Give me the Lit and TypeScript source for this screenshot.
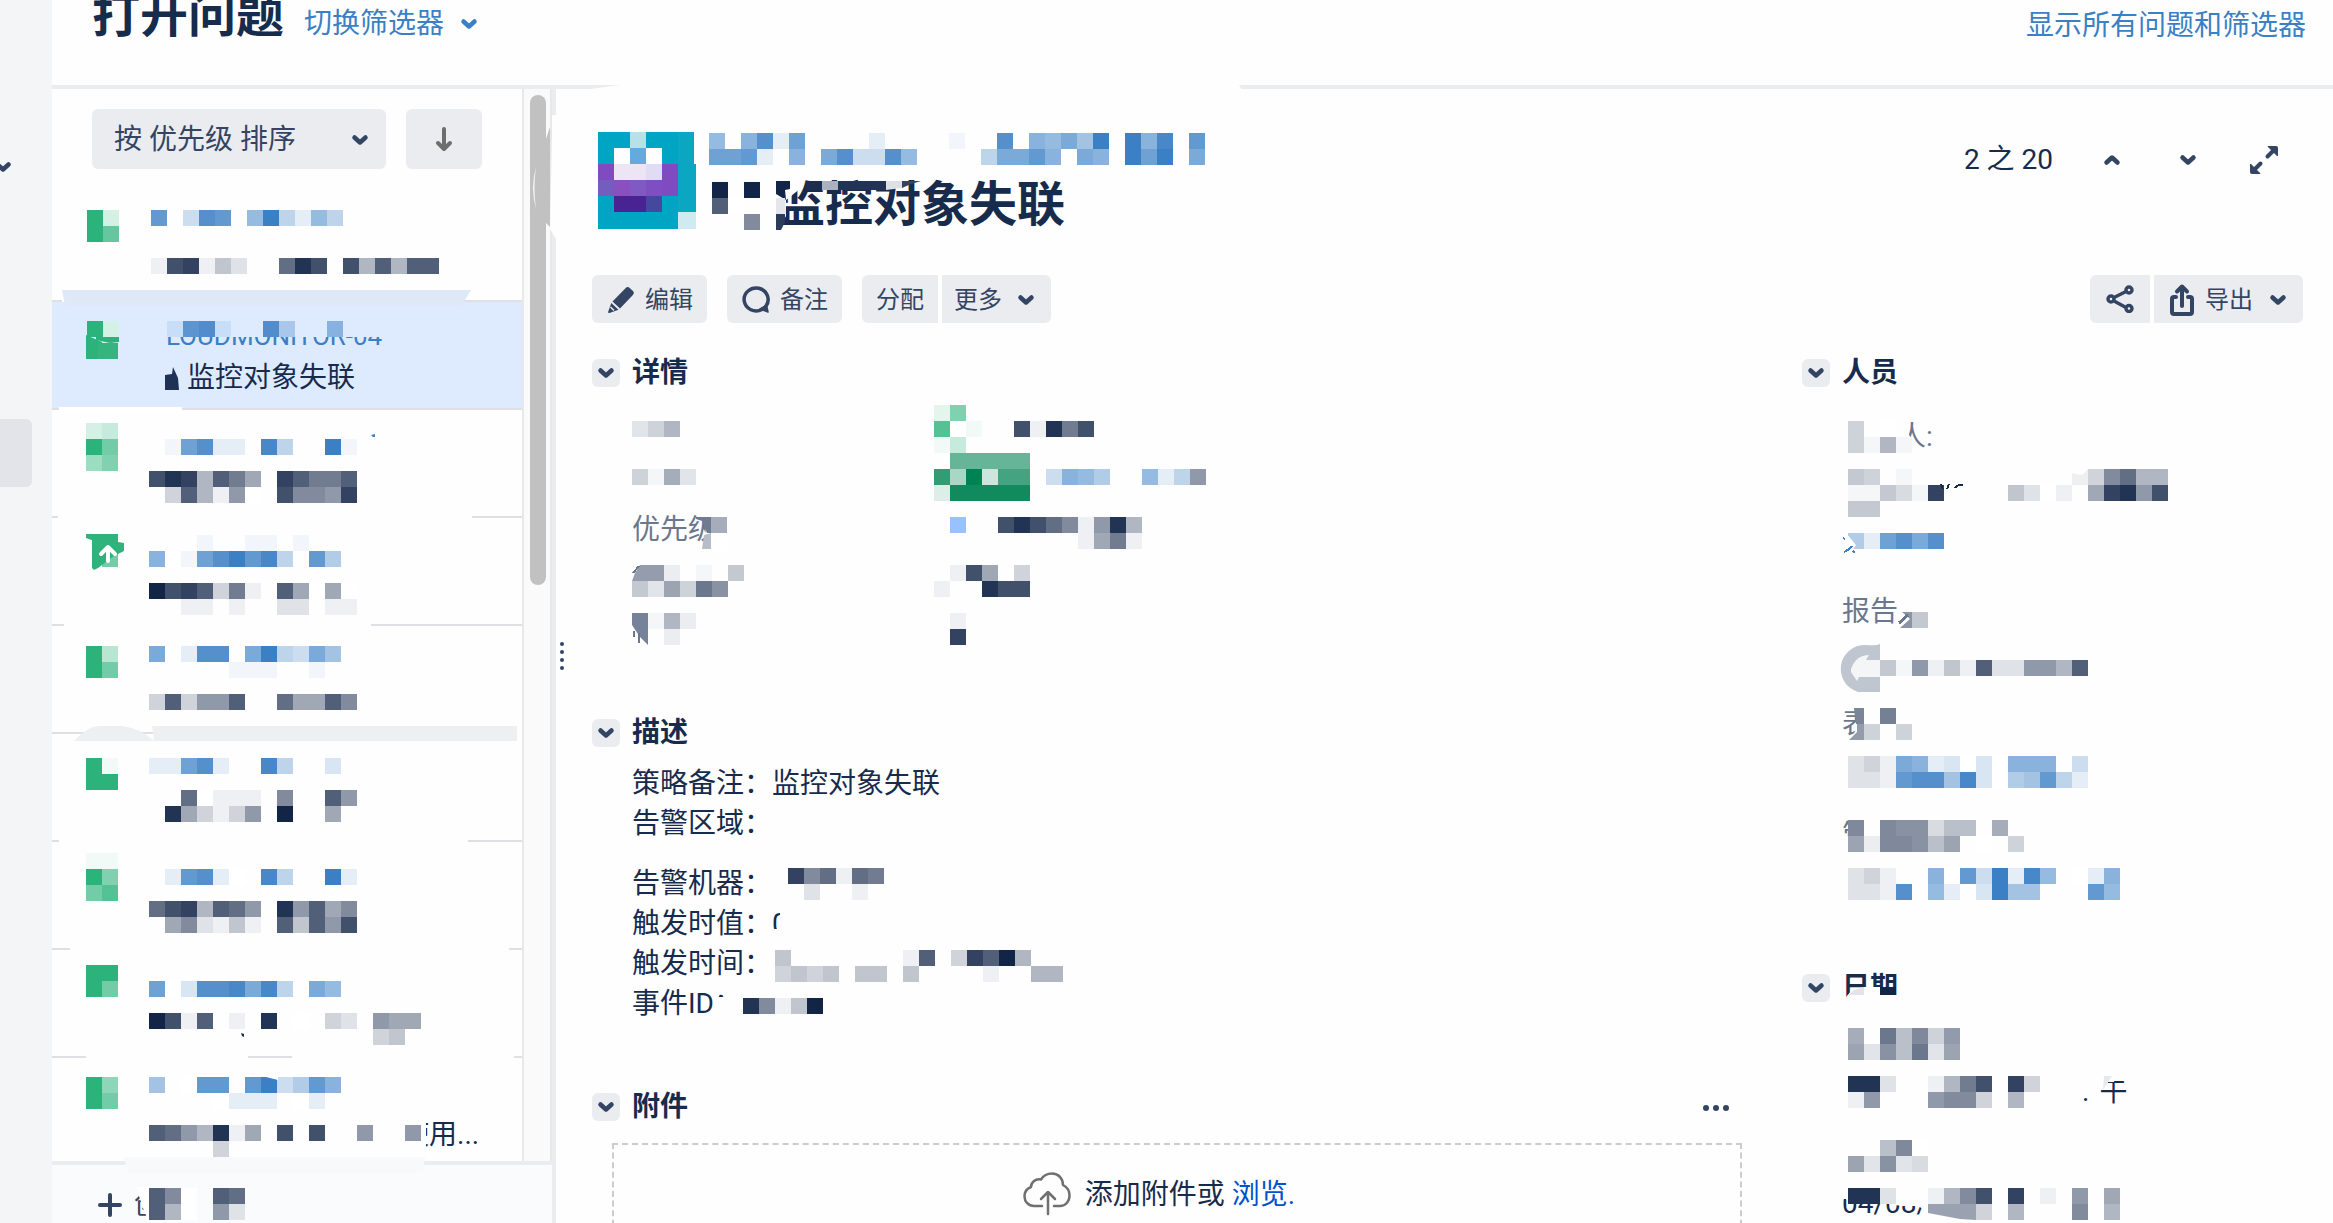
import { LitElement, html, svg, css, nothing } from "lit";
import { customElement } from "lit/decorators.js";

type RGB = [number, number, number];

const CELL = 16;

/* Tones of the mosaic cells; a hex digit after the tone gives its strength. */
const TONES: Record<string, RGB> = {
  N: [18, 37, 71],
  B: [59, 127, 196],
  S: [107, 119, 140],
  G: [43, 179, 123],
  D: [0, 131, 83],
  L: [153, 193, 255],
};
const WHITE: RGB = [255, 255, 255];
const SELECTED: RGB = [222, 235, 255];

function mix(tone: RGB, strength: number, base: RGB): string {
  const c = tone.map((v, i) => Math.round(base[i] + (v - base[i]) * strength));
  return `rgb(${c.join(",")})`;
}

/* Rows such as "N4.c1": a tone letter, then one digit or dot for each cell. */
function cells(rows: string[], x = 0, y = 0, base: RGB = WHITE) {
  const out: unknown[] = [];
  rows.forEach((row, r) => {
    let tone = TONES.N;
    let col = 0;
    for (const ch of row) {
      if (TONES[ch]) {
        tone = TONES[ch];
        continue;
      }
      if (ch !== ".") {
        out.push(svg`<rect x=${x + col * CELL} y=${y + r * CELL} width=${CELL} height=${CELL}
          fill=${mix(tone, parseInt(ch, 16) / 15, base)}></rect>`);
      }
      col++;
    }
  });
  return out;
}

function canvas(width: number, height: number, content: unknown) {
  return html`<svg class="mosaic" width=${width} height=${height} viewBox="0 0 ${width} ${height}"
    shape-rendering="crispEdges" aria-hidden="true">${content}</svg>`;
}

function poly(points: string, fill: string) {
  return svg`<polygon points=${points} fill=${fill} shape-rendering="auto"></polygon>`;
}

const chevron = (up = false) => html`<svg class="icon" width="18" height="12" viewBox="0 0 18 12" aria-hidden="true">
  <path d=${up ? "M3.5 8.5 9 3.5l5.5 5" : "M3.5 3.5 9 8.5l5.5-5"} fill="none" stroke="currentColor"
    stroke-width="4.5" stroke-linecap="round" stroke-linejoin="round"></path></svg>`;

const icons = {
  down: html`<svg class="icon" width="18" height="26" viewBox="0 0 18 26" aria-hidden="true">
    <path d="M9 3v19M3 17l6 6 6-6" fill="none" stroke="#6e6e6e" stroke-width="4" stroke-linecap="round" stroke-linejoin="round"></path></svg>`,
  pencil: html`<svg class="icon" width="28" height="28" viewBox="0 0 28 28" aria-hidden="true">
    <path d="M18.5 2.2a3 3 0 0 1 4.2-.2l3 2.8a3 3 0 0 1 .2 4.2L13 22.5 5.5 15.5z" fill="currentColor"></path>
    <path d="M4.3 17l7.2 6.7-9 3.3a1 1 0 0 1-1.3-1.3z" fill="currentColor"></path>
    <path d="M3.5 21l3.5 3.5" stroke="#ebecf0" stroke-width="1.5"></path></svg>`,
  comment: html`<svg class="icon" width="28" height="28" viewBox="0 0 28 28" aria-hidden="true">
    <path d="M20 23.5A12 11.5 0 1 1 24 20" fill="none" stroke="currentColor" stroke-width="3.5" stroke-linecap="round"></path>
    <path d="M18 23l8 3-1.5-7z" fill="currentColor" stroke="currentColor" stroke-width="1.5" stroke-linejoin="round"></path></svg>`,
  share: html`<svg class="icon" width="28" height="28" viewBox="0 0 28 28" aria-hidden="true">
    <g fill="none" stroke="currentColor" stroke-width="3.4"><path d="M8 12.5 20 6.5M8 16l12 6.5"></path>
    <circle cx="5" cy="14" r="3"></circle><circle cx="23" cy="5" r="3"></circle><circle cx="23" cy="23.5" r="3"></circle></g></svg>`,
  exportBox: html`<svg class="icon" width="26" height="34" viewBox="0 0 26 34" aria-hidden="true">
    <g fill="none" stroke="currentColor" stroke-width="4" stroke-linecap="round" stroke-linejoin="round">
    <path d="M7 14H5a2 2 0 0 0-2 2v13a2 2 0 0 0 2 2h16a2 2 0 0 0 2-2V16a2 2 0 0 0-2-2h-2"></path>
    <path d="M13 5v18M8 8.5l5-5 5 5"></path></g></svg>`,
  expand: html`<svg class="icon" width="30" height="30" viewBox="0 0 30 30" aria-hidden="true">
    <path d="M18.5 11.5 25 5M5 25l6.5-6.5" stroke="currentColor" stroke-width="4" stroke-linecap="round"></path>
    <path d="M19 1.5h8.5a1 1 0 0 1 1 1V11zM1.5 19v8.5a1 1 0 0 0 1 1H11z" fill="currentColor" stroke="currentColor" stroke-linejoin="round"></path></svg>`,
  plus: html`<svg class="icon" width="24" height="26" viewBox="0 0 24 26" aria-hidden="true">
    <path d="M12 3v20M2 13h20" stroke="currentColor" stroke-width="4" stroke-linecap="round"></path></svg>`,
  more: html`<svg class="icon" width="28" height="8" viewBox="0 0 28 8" aria-hidden="true">
    <g fill="currentColor"><circle cx="4" cy="4" r="3"></circle><circle cx="14" cy="4" r="3"></circle><circle cx="24" cy="4" r="3"></circle></g></svg>`,
  cloud: html`<svg class="icon" width="48" height="44" viewBox="0 0 48 44" aria-hidden="true">
    <g fill="none" stroke="#707070" stroke-width="2.5" stroke-linecap="round" stroke-linejoin="round">
    <path d="M19 34h-8C5.5 34 1.5 29.5 1.5 24.5c0-4.5 2.5-8 6.5-9.5 0-4.5 4-8.5 10-7.5C20.5 3.5 24.5 1.5 29 1.5c6.5 0 11 5 11 11.5 4 2 6.5 5.5 6.5 10.5 0 6-4 10.5-9.5 10.5h-6"></path>
    <path d="M25 42V21M18 27l7-7 7 7"></path></g></svg>`,
};

interface Issue {
  key?: string;
  summary?: string;
  tail?: string;
  y: number;
  x?: number;
  icon: string[];
  rows: string[];
  rule: number[][];
  over?: unknown;
  selected?: boolean;
}

const RULE = 470;

const issues: Issue[] = [
  {
    y: 16, x: 99, icon: ["Gf3", "Gfb"],
    rows: ["Bc.4dc.8f5285", "", "", "N1cd142..aec.c5b5bb"],
    rule: [[0, 10], [412, RULE]],
    over: poly("10,96 419,96 410,111 13,111", "#dee8f7"),
  },
  {
    key: "CLOUDMONITOR-04", summary: "监控对象失联", selected: true, y: 20, x: 99, icon: [],
    rows: [],
    rule: [[0, 7], [130, RULE]],
    over: svg`
      ${poly("96,8 340,8 340,35 113,35 113,44 96,44", "#deebff")}
      ${cells([".B2cd2..d5..8"], 99, 19, SELECTED)}
      ${cells(["Gf3"], 35, 19)}
      ${poly("34,33 50,40 50,57 34,57", "#2bb37b")}
      ${poly("44,35 67,35 67,40 58,41 44,38", "#2bb37b")}
      ${poly("46,41 66,41 66,57 46,57", "#34b47f")}
      ${poly("113,73 120,72 121,65 126,76 127,88 113,88", "#1f3155")}
      ${poly("7,105 130,105 130,109 7,109", "#ffffff")}`,
  },
  {
    y: 13, icon: ["G34", "Gfa", "G79"],
    rows: ["", ".B1bd22.e5..f1", "", "Nced5b96.db99b", ".N3b5170.c887d"],
    rule: [[0, 6], [420, RULE]],
    over: poly("319,25 323,24 323,27 321,27", "#3b7fc4"),
  },
  {
    y: 17, icon: [],
    rows: ["...B1..11.1", "B901bdfce5.c6", "", "Nfcdb391.b6060", "..N11.1..22.11"],
    rule: [[0, 12], [319, RULE]],
    over: svg`
      ${cells(["Gff", "G.a"], 34, 17)}
      ${poly("34,20 40,22 40,36 34,36", "#fefefe")}
      ${poly("34,16 66,16 66,24 72,25 72,33 62,38 46,50 42,52 40,50 40,22 34,19", "#2fb37c")}
      <path d="M56 43V30M49 36l7-7 7 7" fill="none" stroke="#fff" stroke-width="4" stroke-linecap="round"
        stroke-linejoin="round" shape-rendering="auto"></path>`,
  },
  {
    y: 20, icon: ["Gf5", "Gfa"],
    rows: ["Ba.2dd.af54a7", ".....B111..1", "", "N3b377b..a66b8"],
    rule: [[0, 101]],
    over: svg`<path d="M22 115Q36 100 48 100H70Q88 102 102 115Z" fill="#eeeff1" shape-rendering="auto"></path>
      ${poly("100,100 465,100 465,115 102,115", "#eeeff1")}`,
  },
  {
    y: 24, icon: ["Gf1", "Gff"],
    rows: ["B22bd2..e5..3", "", "..Na0111.8..b7", ".Ne63137.f..6"],
    rule: [[0, 7], [416, RULE]],
  },
  {
    y: 11, icon: ["G11", "Gf9", "Gac"],
    rows: ["", ".B2cd20.e5..f2", "", "Nacd5ba7.e7b68", ".N682141.b4b7c"],
    rule: [[0, 18], [457, RULE]],
  },
  {
    y: 15, icon: ["Gff", "Gfa"],
    rows: ["", "Bb03ddeae5.a8", "", "Nfc1b.1.e.0.32.766", "..............N34"],
    rule: [[0, 34], [196, 240], [462, RULE]],
    over: poly("189,83 192,84 192,87 190,86", "#172b4d"),
  },
  {
    y: 19, icon: ["Gf8", "Gfa"],
    rows: ["B7.0cc.cf46c9", "....B0222.02", "", "Nba75e16.c.c..7..7", "....N3"],
    tail: "使用...",
    rule: [],
    over: poly("206,17 226,22 226,18 210,16", "#ffffff"),
  },
];

const details: { name?: string; label: string[]; value: string[]; mark?: unknown }[] = [
  { label: ["", "S358"], value: ["G29", "Gc01..Nc1e9c", "G14"] },
  { label: ["", "S5193"], value: [".D99999", "Dc5f3bb.B4986..825N7", "D2eeeee"] },
  {
    name: "优先级", label: [],
    value: ["", ".Lf..Nceca817e5", ".........N1691"],
    mark: svg`${poly("75,14 96,14 96,50 68,50 73,36", "#ffffff")}
      ${poly("64,16 79,16 79,32 75,32 70,20 64,18", "#707b92")}
      ${cells(["S9"], 79, 16)}${poly("72,34 79,32 79,48 70,48", "#b8bdca")}`,
  },
  {
    label: ["", "..S2.1.6", "S63a5fc"], value: ["", ".N1c6.3", "N1..ecc"],
    mark: svg`${poly("8,16 32,16 32,32 0,32 3,24", "#959dac")}<path d="M1 24 7 17" stroke="#6b778c" stroke-width="2"></path>`,
  },
  {
    label: ["", "S.182", "..S2"], value: ["", ".N1", ".Nd"],
    mark: svg`${poly("0,16 16,16 16,48 8,40 0,28", "#75829a")}<path d="M2 34v6M7 36v10" stroke="#6b778c" stroke-width="2"></path>`,
  },
];

@customElement("app-root")
export class AppRoot extends LitElement {
  static styles = css`
    :host {
      display: block;
      height: 100vh;
      overflow: hidden;
      background: #fefefe;
      color: #172b4d;
      font: 28px/40px Roboto, "Noto Sans CJK SC", sans-serif;
    }
    * { box-sizing: border-box; }
    h1, h2, p, ul, dl, dd { margin: 0; padding: 0; }
    ul { list-style: none; }
    a { color: #3b7fc4; text-decoration: none; }
    button { border: 0; margin: 0; padding: 0; background: none; color: #344563; font: inherit; cursor: pointer; }
    .icon { display: block; flex: none; }
    .mosaic { display: block; overflow: visible; flex: none; }
    .stack { display: grid; justify-items: start; }
    .stack > * { grid-area: 1 / 1; }

    .app { display: grid; grid-template-columns: 52px minmax(0, 1fr); height: 100%; }
    .rail { background: #f4f5f7; overflow: hidden; }
    .rail-toggle { display: block; margin: 161px 0 0 -6px; }
    .rail-item { display: block; width: 32px; height: 68px; margin-top: 246px; background: #e2e4ea; border-radius: 0 6px 6px 0; }
    .page { display: flex; flex-direction: column; min-width: 0; min-height: 0; }

    .top { display: flex; align-items: flex-start; height: 85px; flex: none; padding: 0 27px 0 40px; overflow: hidden; }
    .top h1 { margin-top: -8px; font-size: 48px; line-height: 48px; font-weight: 700; }
    .switch { display: flex; align-items: center; gap: 16px; margin: 4px 0 0 20px; color: #3b7fc4; }
    .all { margin: 6px 0 0 auto; }

    .body { display: grid; grid-template-columns: 504px minmax(0, 1fr); flex: 1; min-height: 0; }
    .side { display: flex; flex-direction: column; min-height: 0; border-right: 4px solid #ebecf0; }
    .side-main { display: grid; grid-template-columns: minmax(0, 1fr) 30px; flex: 1; min-height: 0; }
    .side-list { overflow: hidden; }
    .track { border: 2px solid #e8e8e8; border-width: 0 2px; background: #fafafa; padding: 6px 4px 0 6px; }
    .thumb { width: 16px; height: 46%; border-radius: 8px; background: #c1c1c1; }
    .sort { display: flex; gap: 20px; padding: 20px 40px 25px; }
    .sort-by { display: flex; align-items: center; justify-content: space-between; width: 294px; height: 60px; padding: 2px 17px 0 22px; border-radius: 6px; background: #ebecf0; }
    .sort-dir { display: flex; align-items: center; justify-content: center; width: 76px; height: 60px; border-radius: 6px; background: #ebecf0; }
    .issue { height: 108px; }
    .issue.selected { background: #deebff; }
    .issue a { height: 108px; color: #172b4d; }
    .text { display: flex; flex-direction: column; padding: 14px 0 0 97px; }
    .key { color: #3b7fc4; font-size: 26px; }
    .summary { padding-left: 38px; margin-top: 2px; }
    .tail { padding: 57px 0 0 349px; }
    .side-foot { flex: none; height: 62px; border-top: 4px solid #ebecf0; background: #fafbfc; }
    .create { display: flex; align-items: center; gap: 12px; padding: 20px 0 0 46px; color: #344563; }

    .main { display: grid; grid-template-columns: 10px minmax(0, 1fr); min-height: 0; overflow: hidden; }
    .grip { display: flex; flex-direction: column; justify-content: center; gap: 4px; padding-left: 4px; height: 1134px; }
    .grip i { width: 4px; height: 4px; border-radius: 2px; background: #344563; }
    .view { padding: 43px 30px 0 26px; }
    .head { display: flex; align-items: flex-start; gap: 13px; padding-left: 6px; }
    .head-text { flex: 1; }
    .crumb { display: block; height: 48px; }
    .head h1 { padding: 1px 0 0 68px; font-size: 48px; line-height: 48px; font-weight: 700; }
    .pager { display: flex; align-items: center; gap: 58px; padding: 8px 24px 0 0; }
    .pager span { margin-right: -8px; }
    .pager button:last-child { margin-left: -6px; }

    .tools { display: flex; gap: 20px; margin-top: 46px; }
    .group { display: flex; gap: 4px; }
    .group:last-child { margin-left: auto; }
    .btn { display: flex; align-items: center; gap: 10px; height: 48px; padding: 2px 14px 0 15px; border-radius: 6px; background: #ebecf0; font-size: 24px; }
    .btn.first { padding-left: 14px; border-radius: 6px 0 0 6px; }
    .btn.share { padding: 0 16px; }
    .btn.last { border-radius: 0 6px 6px 0; padding: 2px 16px 0 12px; gap: 15px; }
    .btn.last.out { padding: 2px 16px 0 15px; gap: 10px; }
    .btn.out .icon:last-child { margin-left: 6px; }

    .cols { display: grid; grid-template-columns: minmax(0, 1fr) 501px; gap: 60px; margin-top: 36px; }
    .title { display: flex; align-items: center; height: 28px; gap: 12px; }
    .title h2 { font-size: 28px; line-height: 30px; font-weight: 700; }
    .fold { display: flex; align-items: center; justify-content: center; width: 28px; height: 28px; border-radius: 6px; background: #ebecf0; }
    .title .more { margin: 2px 12px 0 auto; }
    .details { padding: 18px 0 0 40px; }
    .detail { display: grid; grid-template-columns: 302px minmax(0, 1fr); height: 48px; }
    .detail dt { color: #6b778c; }
    .detail .name { padding-top: 9px; }
    .section { margin-top: 74px; }
    .desc { padding: 17px 0 0 40px; }
    .desc p + p { margin-top: 20px; }
    .line { display: flex; align-items: center; height: 40px; }
    .section.files { margin-top: 69px; }
    .drop { display: flex; align-items: center; justify-content: center; gap: 14px; margin: 22px 0 0 20px; height: 102px; padding-right: 36px; border: 2px dashed #ccc; }
    .drop span { padding-top: 2px; }
    .drop a { color: #0052cc; }
    .people { padding: 34px 0 0 40px; }
    .row { height: 32px; line-height: 32px; color: #6b778c; margin-bottom: 16px; }
    .row.tall { height: 48px; }
    .row.thin { height: 16px; margin-bottom: 47px; }
    .row.wide { margin-bottom: 32px; }
    .dark { color: #172b4d; }
    .dates { margin-top: 74px; }
    .dates .people { padding-top: 26px; }
    .noon { padding-left: 240px; }
    .noon b { font-weight: 400; margin-right: 10px; }
  `;

  private fold(label: string) {
    return html`<button class="fold" aria-label=${label}>${chevron()}</button>`;
  }

  private issue(item: Issue) {
    return html`<li class="issue ${item.selected ? "selected" : ""}">
      <a class="stack" href="#issue">
        ${item.key ? html`<span class="text"><span class="key">${item.key}</span><span class="summary">${item.summary}</span></span>` : nothing}
        ${item.tail ? html`<span class="tail">${item.tail}</span>` : nothing}
        ${canvas(RULE, 108, svg`
          ${item.rule.map(([a, b]) => svg`<rect x=${a} y="106" width=${b - a} height="2" fill="#dfe0e6"></rect>`)}
          ${item.tail ? poly("340,50 374,50 374,96 340,96", "#fefefe") : nothing}
          ${cells(item.icon, item.x ? 35 : 34, item.y)}
          ${cells(item.rows, item.x ?? 97, item.y)}
          ${item.over ?? nothing}`)}
      </a>
    </li>`;
  }

  private sidebar() {
    return html`<aside class="side">
      <div class="side-main">
        <div class="side-list">
          <div class="sort">
            <button class="sort-by"><span>按 优先级 排序</span>${chevron()}</button>
            <button class="sort-dir" aria-label="排序">${icons.down}</button>
          </div>
          <ul>${issues.map((i) => this.issue(i))}</ul>
        </div>
        <div class="track stack">
          <div class="thumb"></div>
          ${canvas(20, 1000, svg`
            ${poly("16,44 20,32 20,132 16,128", "#c1c1c1")}
            ${poly("22,20 26,20 26,144 20,134 22,40", "#fefefe")}
            <path d="M6 72Q0 92 6 114Q3 92 6 72Z" fill="#f4f4f4" shape-rendering="auto"></path>`)}
        </div>
      </div>
      <div class="side-foot stack">
        <button class="create">${icons.plus}<span>创</span></button>
        ${canvas(498, 58, svg`
          ${poly("72,-8 373,-8 371,8 76,8", "#f8f9fb")}
          ${poly("84,22 132,22 132,57 97,57 92,46 88,34", "#ffffff")}
          ${cells(["Nb80.ba", "Nb50.72"], 97, 23)}`)}
      </div>
    </aside>`;
  }

  private header() {
    const T = "#00a5c4";
    const avatar = [
      [T, T, "#b8e0e8", T, T, "#0aa6c2"],
      [T, "#fefefe", "#64aadf", "#fefefe", T, "#0aa6c2"],
      ["#804bc1", "#ede4f4", "#ede4f4", "#dfdcf3", "#804bc1", "#0aa6c2"],
      ["#755cbf", "#8b50bf", "#7f5ac2", "#7f4ec0", "#804bc1", "#0aa6c2"],
      [T, "#4a2392", "#4a2392", "#44489e", T, "#0aa6c2"],
      [T, T, T, T, T, "#cfeaf0"],
    ];
    return html`<header class="head">
      ${canvas(98, 97, avatar.flatMap((r, y) => r.map((c, x) => svg`<rect x=${x * CELL} y=${y * CELL}
        width=${x === 5 && y > 1 ? 18 : CELL} height=${y === 5 ? 17 : CELL} fill=${c}></rect>`)))}
      <div class="head-text">
        <a class="crumb" href="#project">${canvas(512, 32, cells([
          "B8.9d2b....2....1..d.98a7f.f9e.c",
          "Bbbc2.9.ad44d8....5aac90a9.fbf.a",
        ], 0, 1))}</a>
        <div class="stack">
          <h1>监控对象失联</h1>
          ${canvas(360, 49, svg`
            ${poly("66,0 92,0 92,8 77,20 77,36 70,49 66,49", "#fefefe")}
            ${cells(["Nf.f", "Nb0", "..N8"], 3, 2)}
            ${poly("67,1 81,1 81,9 76,10 77,20 67,14", "#132547")}
            ${poly("67,34 76,34 76,42 72,50 67,50", "#2b3b5a")}
            ${poly("67,18 76,18 77,34 67,34", "#e4e6eb")}
            ${poly("97,1 113,1 113,10 97,10", "#1c2d50")}
            ${poly("113,1 129,1 129,10 113,10", "#aab1bf")}
            ${poly("129,1 177,1 177,10 129,10", "#223355")}
            ${poly("177,1 193,1 193,8 177,10", "#dfe0e6")}
            ${poly("193,1 212,1 202,4 193,8", "#34435f")}`)}
        </div>
      </div>
      <nav class="pager">
        <span>2 之 20</span>
        <button aria-label="上一个">${chevron(true)}</button>
        <button aria-label="下一个">${chevron()}</button>
        <button aria-label="展开">${icons.expand}</button>
      </nav>
    </header>`;
  }

  private tools() {
    return html`<div class="tools">
      <button class="btn">${icons.pencil}编辑</button>
      <button class="btn">${icons.comment}备注</button>
      <div class="group">
        <button class="btn first">分配</button>
        <button class="btn last">更多${chevron()}</button>
      </div>
      <div class="group">
        <button class="btn first share" aria-label="分享">${icons.share}</button>
        <button class="btn last out">${icons.exportBox}导出${chevron()}</button>
      </div>
    </div>`;
  }

  private left() {
    return html`<div>
      <section>
        <div class="title">${this.fold("详情")}<h2>详情</h2></div>
        <dl class="details">
          ${details.map((d) => html`<div class="detail">
            <dt class="stack">${d.name ? html`<span class="name">${d.name}</span>` : nothing}
              ${canvas(160, 48, svg`${cells(d.label)}${d.mark ?? nothing}`)}</dt>
            <dd>${canvas(336, 48, cells(d.value))}</dd>
          </div>`)}
        </dl>
      </section>
      <section class="section">
        <div class="title">${this.fold("描述")}<h2>描述</h2></div>
        <div class="desc">
          <p>
            <span class="line">策略备注：监控对象失联</span>
            <span class="line">告警区域：</span>
          </p>
          <p>
            <span class="line">告警机器：${canvas(112, 32, cells([".Nd8a1a9", "..N2..1"]))}</span>
            <span class="line">触发时值：<span class="stack"><span>0</span>${canvas(20, 40, svg`
              ${poly("8,0 20,0 20,40 0,40 0,25 5,25 5,16 8,13", "#fefefe")}`)}</span></span>
            <span class="line">触发时间：${canvas(292, 32, cells(["N4.......1b.3dbf5", "N3434.44.4....1..55"], 3, 2))}</span>
            <span class="line"><span>事件ID：</span>${canvas(80, 16, svg`
              ${poly("-28,1 0,1 0,20 -28,20", "#fefefe")}${cells(["Ne814f"], 1, 2)}`)}</span>
          </p>
        </div>
      </section>
      <section class="section files">
        <div class="title">${this.fold("附件")}<h2>附件</h2><button class="more" aria-label="更多">${icons.more}</button></div>
        <div class="drop">${icons.cloud}<span>添加附件或 <a href="#browse">浏览.</a></span></div>
      </section>
    </div>`;
  }

  private right() {
    const blank = "#fefefe";
    return html`<div>
      <section>
        <div class="title">${this.fold("人员")}<h2>人员</h2></div>
        <div class="people">
          <div class="row stack"><span>经办人:</span>${canvas(100, 32, svg`
            ${poly("-2,-4 67,-4 67,14 71,20 71,36 -2,36", blank)}${cells(["S5.0", "S5181"], 6, 0)}`)}</div>
          <div class="row tall">${canvas(330, 48, svg`
            ${cells(["S65.1...........N38a55", "S11641Nd....4201.6de7c", "S66"], 6, 0)}
            ${poly("230,4 240,6 246,0 246,16 230,16", "#eeeff1")}
            <path d="M99 15l2 5M107 15l-2 5M113 19q3-4 8-3" stroke="#172b4d" stroke-width="2" fill="none"></path>`)}</div>
          <div class="row thin">${canvas(112, 16, svg`${cells(["B62bdad"], 6, 0)}
            ${poly("4,0 14,12 10,18 4,18", blank)}
            <path d="M2 19q5-2 8-6M1 5l2 1M11 18l2 2" stroke="#3b7fc4" stroke-width="2" fill="none"></path>`)}</div>
          <div class="row stack"><span>报告人</span>${canvas(90, 32, svg`
            ${poly("56,-2 90,-2 90,32 56,32 68,18 62,14 56,16", blank)}
            ${poly("60,16 70,16 70,32 58,32 68,23", "#8b95a5")}${cells(["", "....S6"], 6, 0)}
            <path d="M57 27l9-8" stroke="#6b778c" stroke-width="3"></path>`)}</div>
          <div class="row tall">${canvas(250, 48, svg`
            <path d="M38 0v48H16A24 24 0 0 1 24 1Q34 2 38 0Z" fill="#c0c6d0" shape-rendering="auto"></path>
            <path d="M38 16v17H17l-2 4-6-9v-3Q14 11 27 11l-3 5Z" fill="#f4f5f7" shape-rendering="auto"></path>
            ${cells(["..S61N7141b22775b"], 6, 16)}`)}</div>
          <div class="row stack"><span>表</span>${canvas(80, 32, svg`
            ${poly("14,-2 34,-2 34,34 6,34 14,22", blank)}
            ${poly("12,0 22,0 22,16 14,16", "#7a8597")}${poly("15,16 22,16 22,32 7,32 15,24", "#939cab")}
            ${cells(["..Se", ".S5.5"], 6, 0)}`)}</div>
          <div class="row wide">${canvas(256, 32, cells(["N231Ba923030999.4", "N221Bcdd7e3067c52"], 6, 0))}</div>
          <div class="row stack"><span>管</span>${canvas(190, 32, svg`
            ${poly("7,-4 36,-4 36,34 -2,34 -2,16 7,16", blank)}
            ${cells(["Sd.dcc477.9", "Sa2ddc7a.0.5"], 6, 0)}`)}</div>
          <div class="row">${canvas(290, 32, cells(["N231..B90c4f2e8.029", "N221Bd.82.3f77...c8"], 6, 0))}</div>
        </div>
      </section>
      <section class="dates">
        <div class="title">${this.fold("日期")}<div class="stack"><h2>日期</h2>${canvas(60, 28, svg`
          ${poly("4,24 10,17 22,14 38,14 38,22 60,22 60,30 0,32", blank)}
          ${poly("6,22 12,17 22,14 22,22", "#e2e4e9")}
          ${poly("38,14 54,14 54,22 38,22", "#132547")}`)}</div></div>
        <div class="people">
          <div class="row">${canvas(120, 32, cells(["S9.f7d5b", "Sa3c7f3a"], 6, 0))}</div>
          <div class="row stack wide dark"><span class="noon"><b>.</b>午</span>${canvas(290, 32, svg`
            ${poly("252,-2 274,-2 272,6 266,6 262,14 254,14", blank)}
            ${poly("262,0 270,0 261,14", "#e6e8ec")}
            ${cells(["Nee2..159c.d3", "N17...7883.5"], 6, 0)}`)}</div>
          <div class="row">${canvas(90, 32, cells(["S..7d0", "Sa3c34"], 6, 0))}</div>
          <div class="row stack dark"><span>04/08/2</span>${canvas(290, 32, svg`
            ${poly("-2,-4 100,-4 100,22 86,24 76,18 60,18 40,15 6,14 4,11 -2,11", blank)}
            ${cells(["Nee2..158c.d.1.7.6", "........N3.5...8.5"], 6, 0)}
            ${poly("86,16 134,16 134,32 118,31 86,25", "#9aa1b0")}`)}</div>
        </div>
      </section>
    </div>`;
  }

  render() {
    return html`<div class="app">
      <nav class="rail">
        <button class="rail-toggle" aria-label="菜单">${chevron()}</button>
        <a class="rail-item" href="#current" aria-label="当前"></a>
      </nav>
      <div class="page">
        <header class="top">
          <h1>打开问题</h1>
          <button class="switch">切换筛选器${chevron()}</button>
          <a class="all" href="#all">显示所有问题和筛选器</a>
        </header>
        <svg class="mosaic" width="100%" height="4" aria-hidden="true">
          <rect width="100%" height="4" fill="#ebecf0"></rect>
          <polygon points="538,4 568,0 1187,0 1190,5 538,5" fill="#fefefe"></polygon>
        </svg>
        <div class="body">
          ${this.sidebar()}
          <main class="main">
            <div class="grip"><i></i><i></i><i></i><i></i></div>
            <div class="view">
              ${this.header()}
              ${this.tools()}
              <div class="cols">${this.left()}${this.right()}</div>
            </div>
          </main>
        </div>
      </div>
    </div>`;
  }
}
